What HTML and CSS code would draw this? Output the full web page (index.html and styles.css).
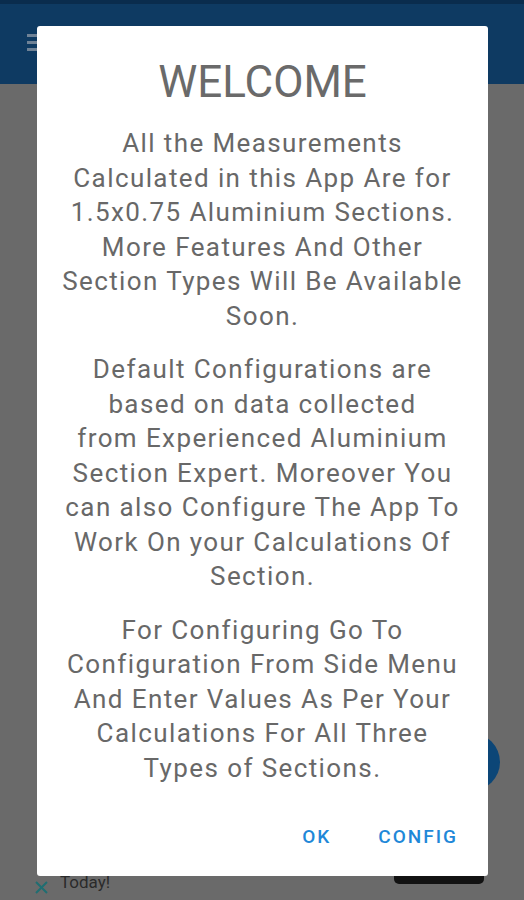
FILE: index.html
```html
<!DOCTYPE html>
<html>
<head>
	<title>Welcome</title>
	<link rel="stylesheet" href="styles.css">
</head>
<body>
	<div class="app">
		<div class="status-bar"></div>
		<div class="app-bar">
			<div class="menu-icon"><span></span><span></span><span></span></div>
		</div>
		<div class="content"></div>
		<div class="fab"></div>
		<div class="banner">
			<div class="banner-close">
				<svg width="13" height="13" viewBox="0 0 13 13"><path d="M1 1L12 12M12 1L1 12" stroke="#1f6e72" stroke-width="2" fill="none"/></svg>
			</div>
			<div class="banner-text">Today!</div>
			<div class="banner-button"></div>
		</div>
	</div>

	<div class="dialog">
		<h1>WELCOME</h1>
		<p>All the Measurements<br>Calculated in this App Are for<br>1.5x0.75 Aluminium Sections.<br>More Features And Other<br>Section Types Will Be Available<br>Soon.</p>
		<p>Default Configurations are<br>based on data collected<br>from Experienced Aluminium<br>Section Expert. Moreover You<br>can also Configure The App To<br>Work On your Calculations Of<br>Section.</p>
		<p>For Configuring Go To<br>Configuration From Side Menu<br>And Enter Values As Per Your<br>Calculations For All Three<br>Types of Sections.</p>
		<div class="actions">
			<button>OK</button>
			<button>CONFIG</button>
		</div>
	</div>
</body>
</html>
```

FILE: styles.css
```css
html, body {
	height: 100%;
}

body {
	background-color: #6a6a6a;
	font-family: Roboto, "Noto Sans", sans-serif;
	margin: 0;
	padding: 0;
	overflow: hidden;
}

.app {
	display: flex;
	flex-direction: column;
	height: 100%;
}

.status-bar {
	background-color: #0a2c4d;
	height: 4px;
}

.app-bar {
	background-color: #0e3a62;
	height: 80px;
	padding: 30px 0 0 27px;
	box-sizing: border-box;
}

.menu-icon span {
	background-color: #6f8296;
	display: block;
	height: 3px;
	margin-bottom: 4px;
	width: 12px;
}

.content {
	flex: 1;
}

.fab {
	background-color: #0c4677;
	border-radius: 50%;
	height: 58px;
	position: absolute;
	right: 24px;
	top: 733px;
	width: 58px;
}

.banner {
	display: flex;
	height: 30px;
	padding: 0 40px 0 35px;
}

.banner-close {
	padding-top: 9px;
	width: 25px;
}

.banner-text {
	color: #2a2a2a;
	flex: 1;
	font-size: 17px;
	padding-top: 2px;
}

.banner-button {
	background-color: #121212;
	border-radius: 0 0 5px 5px;
	height: 14px;
	width: 90px;
}

.dialog {
	background-color: #fff;
	border-radius: 3px;
	box-sizing: border-box;
	height: 850px;
	left: 37px;
	padding: 30px 16px 0;
	position: fixed;
	top: 26px;
	width: 451px;
}

h1 {
	color: #6a6a6a;
	font-size: 44px;
	font-weight: 400;
	line-height: 52px;
	margin: 0 0 18px;
	text-align: center;
}

p {
	color: #686868;
	font-size: 26px;
	letter-spacing: 1.4px;
	line-height: 34.5px;
	margin: 0 0 19px;
	text-align: center;
}

.actions {
	display: flex;
	gap: 47px;
	justify-content: flex-end;
	margin-top: 40px;
	padding-right: 14px;
}

button {
	background: none;
	border: none;
	color: #1f88d8;
	font-family: Roboto, sans-serif;
	font-size: 19px;
	font-weight: 500;
	letter-spacing: 2px;
	padding: 0;
}
```
